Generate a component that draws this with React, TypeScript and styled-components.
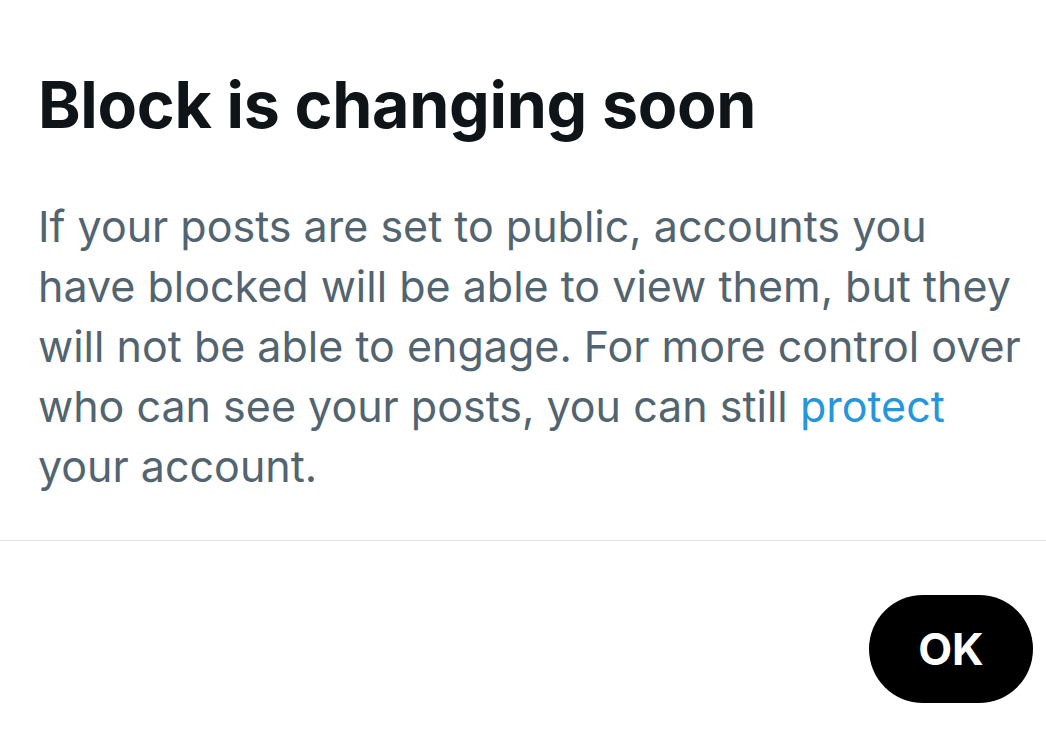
import React from "react";
import styled, { createGlobalStyle } from "styled-components";

const Global = createGlobalStyle`
  html, body { margin: 0; padding: 0; background: #ffffff; }
  body { font-family: Inter, "Noto Sans", sans-serif; -webkit-font-smoothing: antialiased; }
`;

const Sheet = styled.div`
  width: 1046px;
  height: 739px;
  background: #ffffff;
  display: flex;
  flex-direction: column;
  box-sizing: border-box;
`;

const Content = styled.div`
  padding: 67px 0 0 38px;
  display: flex;
  flex-direction: column;
`;

const Title = styled.h1`
  margin: 0;
  font-size: 64.5px;
  line-height: 76px;
  font-weight: 700;
  color: #0f1419;
  letter-spacing: -0.3px;
`;

const Body = styled.p`
  margin: 53px 0 0;
  font-size: 43px;
  line-height: 60px;
  font-weight: 400;
  color: #536471;
  white-space: nowrap;
`;

const Link = styled.a`
  color: #2596dc;
  text-decoration: none;
`;

const Divider = styled.hr`
  margin: 44px 0 0;
  border: none;
  height: 1px;
  background: #dfe4e8;
`;

const Footer = styled.div`
  display: flex;
  justify-content: flex-end;
  padding: 54px 13px 0 0;
`;

const Button = styled.button`
  width: 164px;
  height: 108px;
  border-radius: 54px;
  border: none;
  background: #000000;
  color: #ffffff;
  font-family: Inter, "Noto Sans", sans-serif;
  font-size: 44px;
  font-weight: 700;
  cursor: pointer;
`;

export default function App() {
  return (
    <Sheet>
      <Global />
      <Content>
        <Title>Block is changing soon</Title>
        <Body>
          If your posts are set to public, accounts you
          <br />
          have blocked will be able to view them, but they
          <br />
          will not be able to engage. For more control over
          <br />
          who can see your posts, you can still <Link href="#">protect</Link>
          <br />
          your account.
        </Body>
      </Content>
      <Divider />
      <Footer>
        <Button>OK</Button>
      </Footer>
    </Sheet>
  );
}
